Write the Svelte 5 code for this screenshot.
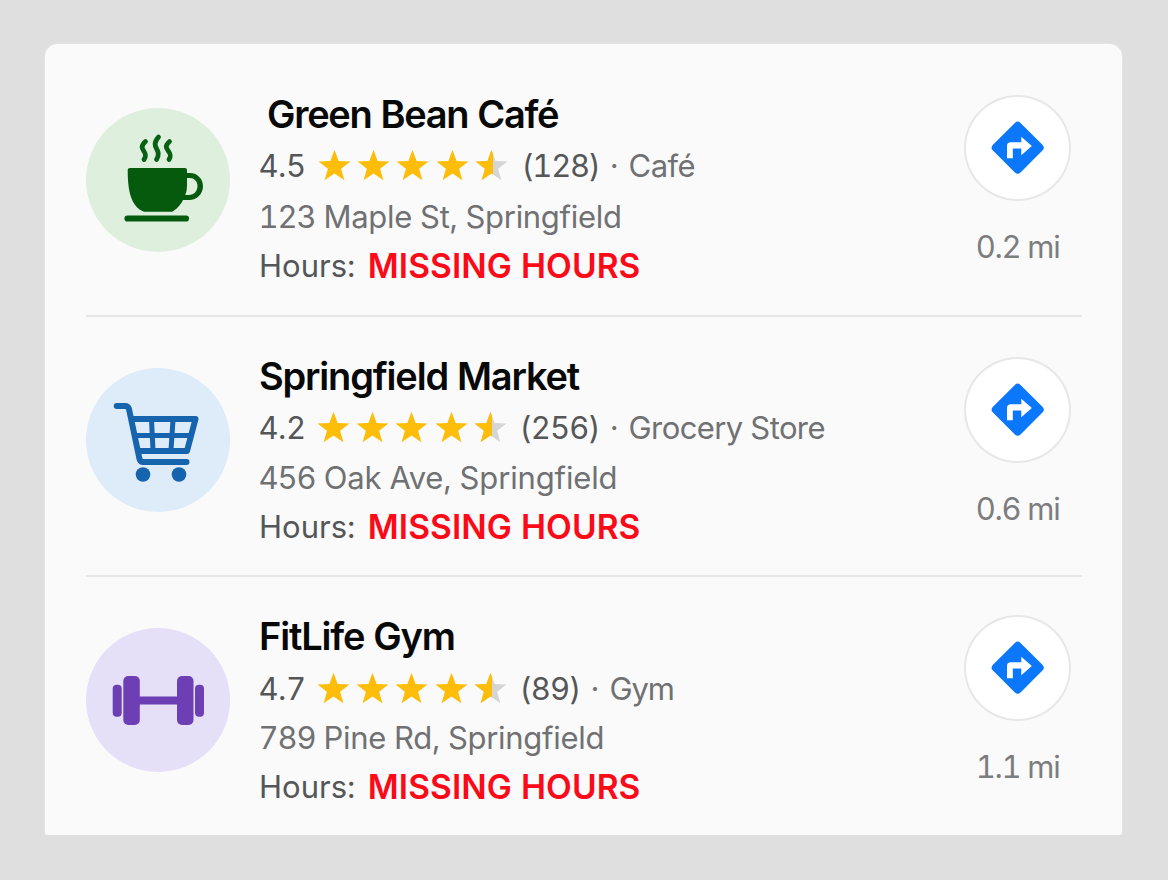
<script>
  const places = [
    { kind: 'cafe', name: 'Green Bean Café', rating: '4.5', count: '(128)', type: 'Café', number: '123', street: 'Maple St, Springfield', distance: '0.2 mi' },
    { kind: 'market', name: 'Springfield Market', rating: '4.2', count: '(256)', type: 'Grocery Store', number: '456', street: 'Oak Ave, Springfield', distance: '0.6 mi' },
    { kind: 'gym', name: 'FitLife Gym', rating: '4.7', count: '(89)', type: 'Gym', number: '789', street: 'Pine Rd, Springfield', distance: '1.1 mi' }
  ];
  const star = 'M16.5 .8 20.6 12 32.5 12.4 23.1 19.7 26.4 31.2 16.5 24.5 6.6 31.2 9.9 19.7 .5 12.4 12.4 12Z';
</script>

<main class="list">
  {#each places as p}
    <article class="place {p.kind}">
      <div class="avatar">
        <svg viewBox="-4 0 160 160" width="160" height="160">
          {#if p.kind === 'cafe'}
            <g fill="none" stroke="#086014" stroke-width="4.8" stroke-linecap="round">
              <path d="M63.500 41.500C54 50 68 51 62 59.500" />
              <path d="M76.500 37C67 48 81 49 74.500 59.500" />
              <path d="M87.500 41.500C78 50 93 51 87 59.500" />
            </g>
            <path fill="#055a0e" d="M48 68H103Q105 68 105 70V73H108C115.500 73 121 79 121 86C121 94 115 100 107 100H101C98 106 94 109.500 90 111.800H62C51 107 45.700 96 45.700 70Q45.700 68 48 68ZM105 78V86Q105 91 103.300 95H107C112 95 115.500 91 115.500 86C115.500 81 112 78 108 78Z" />
            <path d="M45.500 118.500H104" stroke="#055a0e" stroke-width="6.200" stroke-linecap="round" />
          {:else if p.kind === 'market'}
            <g fill="none" stroke="#1764ae" stroke-width="6" stroke-linecap="round" stroke-linejoin="round">
              <path d="M34.700 46H43Q46 46 47 49L57.500 99Q58.500 102 61 102H104.500" />
              <path d="M50 59H113.500L105 91H57" />
              <path d="M53.500 75.500H108M69.500 60 71 90M91 60 89 90" stroke-width="5" />
            </g>
            <circle cx="61" cy="114.500" r="7.300" fill="#1764ae" /><circle cx="97" cy="114.500" r="7.300" fill="#1764ae" />
          {:else}
            <g fill="#6d3fb5">
              <rect x="30.700" y="64.800" width="9" height="32" rx="4" />
              <rect x="41.300" y="56" width="16.500" height="49" rx="5" />
              <rect x="56" y="76.500" width="41" height="8" />
              <rect x="95" y="56" width="16.500" height="49" rx="5" />
              <rect x="113" y="64.800" width="9" height="32" rx="4" />
            </g>
          {/if}
        </svg>
      </div>

      <div class="info">
        <h2><span>{p.name}</span></h2>
        <div class="line meta">
          <span class="rating">{p.rating}</span>
          <span class="stars">
            {#each [0, 1, 2, 3, 4] as i}
              <svg viewBox="0 0 33 33" width="33" height="33">
                {#if i < 4}
                  <path d={star} fill="#fdbd08" />
                {:else}
                  <path d={star} fill="#d5d5d6" />
                  <path d="M16.500 .8 18 5V25.500L16.500 24.500 6.600 31.200 9.900 19.700 .5 12.400 12.400 12Z" fill="#fdbd08" />
                {/if}
              </svg>
            {/each}
          </span>
          <span class="count">{p.count}</span><span class="dot">·</span><span class="type">{p.type}</span>
        </div>
        <div class="line address"><span><span class="number">{p.number}</span> {p.street}</span></div>
        <div class="line hours"><span>Hours:</span><strong>MISSING HOURS</strong></div>
      </div>

      <div class="side">
        <button aria-label="Directions">
          <svg viewBox="0 0 54 54" width="54" height="54">
            <rect x="7.200" y="7.200" width="39" height="39" rx="4" fill="#0b78fb" transform="rotate(45 26.7 26.7)" />
            <path d="M16 37.300V25Q16 21.300 19.700 21.300H30.300V15.700L40.800 25 30.300 34.300V27.500H21.800V37.300Z" fill="#fff" />
          </svg>
        </button>
        <span class="distance">{p.distance}</span>
      </div>
    </article>
  {/each}
</main>

<style>
  :global(body) { margin: 0; background: #dfdfdf; }
  .list {
    box-sizing: border-box;
    width: 1077px;
    height: 791px;
    margin: 44px 0 0 45px;
    padding: 0 40px 0 41px;
    background: #fafafa;
    border-radius: 13px 13px 3px 3px;
    box-shadow: 0 0 2px #fff8;
    font-family: Inter, sans-serif;
    font-size: 31px;
    font-variant-numeric: tabular-nums;
    color: #707173;
    overflow: hidden;
  }
  .place {
    box-sizing: border-box;
    display: flex;
    height: 260px;
    border-bottom: 2px solid #e5e5e6;
  }
  .cafe { height: 273px; }
  .gym { border: 0; }
  .avatar {
    flex: none;
    display: flex;
    align-items: center;
    justify-content: center;
    width: 144px;
    height: 144px;
    margin-top: 51px;
    border-radius: 50%;
  }
  .avatar svg { flex: none; }
  .cafe .avatar { margin-top: 63.500px; background: #dfefdd; }
  .market .avatar { background: #deebf9; }
  .gym .avatar { background: #e5dff7; }
  .info { flex: 1; padding: 36px 0 0 29px; white-space: nowrap; }
  .cafe .info { padding-top: 47px; }
  h2 { margin: 0; font-size: 38px; line-height: 47px; font-weight: 600; color: #070808; letter-spacing: -1.180px; }
  .cafe h2 { padding-left: 8px; letter-spacing: -1.280px; }
  .line { display: flex; align-items: center; height: 49px; line-height: 49px; }
  .meta { box-sizing: border-box; height: 53px; padding-top: 2px; line-height: 56px; }
  .gym .meta { height: 52px; padding-top: 5px; }
  .meta svg { display: block; }
  .rating, .count, .hours span { color: #555658; }
  .rating { width: 58px; margin-left: -.5px; letter-spacing: -.5px; }
  .cafe .rating { width: 59px; }
  .stars { display: flex; gap: 6.400px; }
  .count { margin-left: 12.500px; letter-spacing: -.9px; }
  .cafe .count { margin-left: 13.500px; letter-spacing: -1.300px; }
  .dot { width: 29px; text-align: center; }
  .type { letter-spacing: -.6px; }
  .gym .type { letter-spacing: -1.100px; }
  .address { letter-spacing: -.3px; }
  .market .address { letter-spacing: -.15px; }
  .cafe .address, .gym .address { height: 50px; line-height: 49px; }
  .number { margin-left: -.5px; letter-spacing: -1.100px; }
  strong { margin-left: 12.500px; padding-top: 1px; font-size: 33.500px; font-weight: 600; letter-spacing: .08px; color: #fb0a18; }
  .side { display: flex; flex-direction: column; align-items: center; width: 107px; margin-right: 11px; padding-top: 40px; }
  .cafe .side { padding-top: 51px; }
  .gym .side { padding-top: 38px; }
  button {
    box-sizing: border-box;
    display: flex;
    align-items: center;
    justify-content: center;
    width: 107px;
    height: 106px;
    padding: 0;
    border: 2px solid #e7e7e8;
    border-radius: 50%;
    background: #fff;
  }
  .distance { margin-top: 22px; line-height: 48px; letter-spacing: -1.300px; color: #7c7d7f; white-space: nowrap; }
</style>
